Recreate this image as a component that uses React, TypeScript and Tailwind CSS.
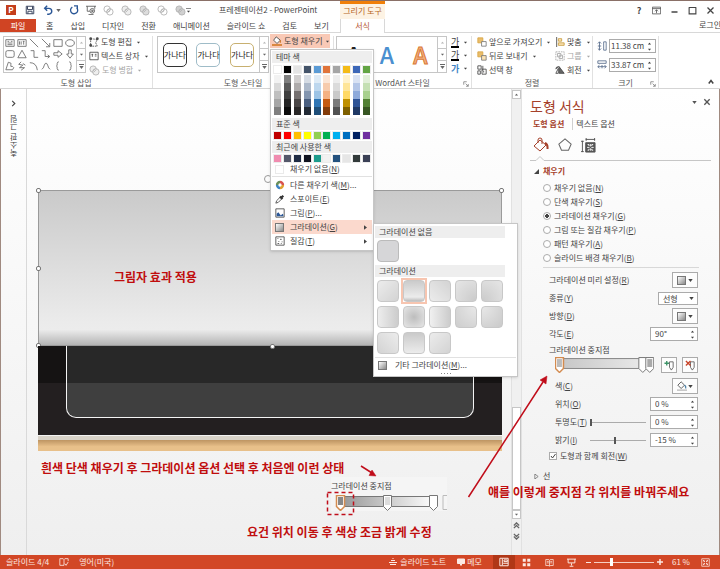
import type { ReactNode } from 'react';

const INK = 'text-[#444444]';

const THEME_COLORS = [
  { base: '#ffffff', tints: ['#f2f2f2', '#d9d9d9', '#bfbfbf', '#a6a6a6', '#7f7f7f'] },
  { base: '#000000', tints: ['#7f7f7f', '#595959', '#404040', '#262626', '#0d0d0d'] },
  { base: '#e4e4e4', tints: ['#d0cece', '#aeabab', '#757070', '#4a4646', '#2a2828'] },
  { base: '#44546a', tints: ['#d6dce4', '#adb9ca', '#8496b0', '#4a5f80', '#222a35'] },
  { base: '#5b9bd5', tints: ['#deebf6', '#bdd7ee', '#9cc3e5', '#2e75b5', '#1e4e79'] },
  { base: '#e0743a', tints: ['#fbe5d5', '#f7cbac', '#f4b183', '#c55a11', '#833c0b'] },
  { base: '#a5a5a5', tints: ['#ededed', '#dbdbdb', '#c9c9c9', '#7b7b7b', '#525252'] },
  { base: '#f4bb17', tints: ['#fff2cc', '#fee599', '#ffd965', '#bf9000', '#7f6000'] },
  { base: '#3c67b8', tints: ['#d9e2f3', '#b4c6e7', '#8eaadb', '#2f5496', '#1f3864'] },
  { base: '#63a544', tints: ['#e2efd9', '#c5e0b3', '#a8d08d', '#538135', '#375623'] },
];

const STANDARD_COLORS = ['#c00000', '#ff0000', '#ffc000', '#ffff00', '#92d050', '#00b050', '#00b0f0', '#0070c0', '#002060', '#7030a0'];
const RECENT_COLORS = ['#f08cb0', '#55596b', '#1f2c44', '#10131f', '#1d9c8c', '#f2f2f2', '#24527f', '#e6e6e6', '#333b3b', '#3b4156'];

const GRADIENTS = [
  'linear-gradient(135deg,#ececec,#d3d3d3)',
  'linear-gradient(180deg,#cbcbcb,#ececec 80%,#bdbdbd)',
  'linear-gradient(225deg,#d3d3d3,#ececec)',
  'radial-gradient(circle at 100% 100%,#cacaca,#e6e6e6)',
  'radial-gradient(circle at 0% 100%,#cacaca,#e6e6e6)',
  'linear-gradient(90deg,#ededed,#cccccc)',
  'radial-gradient(circle,#bdbdbd,#e6e6e6)',
  'linear-gradient(270deg,#cccccc,#f0f0f0)',
  'radial-gradient(circle at 100% 0%,#e8e8e8,#cdcdcd)',
  'radial-gradient(circle at 0% 0%,#e8e8e8,#cacaca)',
  'linear-gradient(45deg,#d3d3d3,#ececec)',
  'linear-gradient(0deg,#ececec,#cacaca)',
  'linear-gradient(315deg,#d3d3d3,#ececec)',
];

function Caret({ className = '' }: { className?: string }) {
  return (
    <svg viewBox="0 0 5 3" className={`w-[5px] h-[3px] shrink-0 ${className}`}>
      <path d="M0.3 0h4.4L2.5 3z" fill="currentColor" />
    </svg>
  );
}

function Icon({ children, className = 'size-[11px]', box = 12 }: { children: ReactNode; className?: string; box?: number }) {
  return (
    <svg viewBox={`0 0 ${box} ${box}`} className={`shrink-0 ${className}`} fill="none" stroke="currentColor" strokeWidth="1">
      {children}
    </svg>
  );
}

function Key({ text, k, tail = '' }: { text: string; k: string; tail?: string }) {
  return (
    <span className="whitespace-nowrap">
      {text}(<u>{k}</u>){tail}
    </span>
  );
}

/* ---------- title bar and tabs ---------- */

function MergeIcon({ fill = 'none' }: { fill?: string }) {
  return (
    <Icon className="size-[11px] text-[#b5b5b5]">
      <circle cx="4.5" cy="4.5" r="3.5" fill={fill} />
      <circle cx="7.5" cy="7.5" r="3.5" fill={fill} />
      <path d="M4 7l3-3M5 8l3-3" />
    </Icon>
  );
}

function QuickAccess() {
  return (
    <div className="flex items-center gap-[7px] pl-[6px] w-[192px] text-[#3f4a63]">
      <span className="flex items-center justify-center size-[10px] bg-[#c43e1c] text-white text-[8px] leading-none font-bold">P</span>
      <button aria-label="저장" className="ml-[2px]">
        <Icon className="size-[10px]">
          <path d="M1.500 1.500h9v9h-9zM3 1.500v4h6v-4M3.500 10.500v-3h5v3" strokeWidth="1.2" />
        </Icon>
      </button>
      <button aria-label="실행 취소" className="flex items-center gap-[3px] text-[#2b5797] ml-[1px]">
        <Icon className="size-[10px]">
          <path d="M5 1L2 4l3 3M2 4h5a3.4 3.4 0 010 7H5" strokeWidth="1.7" />
        </Icon>
        <Caret className="text-[#666]" />
      </button>
      <button aria-label="다시 실행" className="text-[#2b5797] ml-[1px]">
        <Icon className="size-[10px]">
          <path d="M4 2.500A4.3 4.3 0 1 0 9 3M6 1h4v4" strokeWidth="1.6" />
        </Icon>
      </button>
      <button aria-label="슬라이드 쇼 시작">
        <Icon className="size-[10px] text-[#555]">
          <path d="M0 1.500h12M1.500 1.500v6h3M10.500 1.500v3" />
          <circle cx="7.500" cy="7" r="2.800" />
          <path d="M3 11.500h6M7 5.800l2 1.200-2 1.200z" />
        </Icon>
      </button>
      <MergeIcon />
      <MergeIcon fill="#eeeeee" />
      <MergeIcon fill="#dddddd" />
      <MergeIcon />
      <MergeIcon fill="#d0d0d0" />
    </div>
  );
}

function TitleBar() {
  return (
    <div className="flex h-[18px] items-stretch">
      <div className="flex w-[340px] items-center">
        <QuickAccess />
        <button aria-label="빠른 실행 도구 모음 사용자 지정" className="-ml-[6px] flex flex-col items-center gap-px">
          <span className="h-px w-[5px] bg-[#888]" />
          <Caret className="scale-75" />
        </button>
        <span className="ml-[28px] whitespace-nowrap">프레젠테이션2 - PowerPoint</span>
      </div>
      <div className="w-[45px] shrink-0 border-t-[3px] border-[#f07f09] bg-[#fdf3e4] text-center leading-[14px] text-[#b5651d] whitespace-nowrap">
        그리기 도구
      </div>
      <div className="flex flex-1 items-center justify-end gap-[9px] pr-[5px] text-[#444]">
        <button aria-label="도움말" className="w-2 font-bold text-[9px] leading-none">?</button>
        <button aria-label="리본 표시 옵션">
          <Icon className="size-[9px]"><path d="M.5 1.500h11v9H.5zM.5 3.500h11M6 9.500V5M4 7l2-2 2 2" /></Icon>
        </button>
        <button aria-label="최소화">
          <Icon className="size-[9px]"><path d="M2 8h8" strokeWidth="2" /></Icon>
        </button>
        <button aria-label="최대화">
          <Icon className="size-[9px]"><path d="M1.500 2v8.500h9V2M1 2h10" strokeWidth="1.500" /></Icon>
        </button>
        <button aria-label="닫기">
          <Icon className="size-[9px]"><path d="M2 2l8 8M10 2l-8 8" strokeWidth="1.700" /></Icon>
        </button>
      </div>
    </div>
  );
}

function TabRow() {
  const tabs = ['홈', '삽입', '디자인', '전환', '애니메이션', '슬라이드 쇼', '검토', '보기'];
  return (
    <nav className="flex h-[14px] items-stretch">
      <div className="flex w-[340px] border-b border-[#d8d8d8]">
        <button className="w-9 mr-[2px] bg-[#d04423] text-white">파일</button>
        <div className="flex gap-px">
          {tabs.map((t) => (
            <button key={t} className="px-2 whitespace-nowrap">{t}</button>
          ))}
        </div>
      </div>
      <button className="w-[45px] shrink-0 border-x border-[#d8d8d8] text-[#b5532d]">서식</button>
      <div className="flex-1 overflow-hidden border-b border-[#d8d8d8] text-right">
        <button className="-mr-px whitespace-nowrap leading-[10px]">로그인</button>
      </div>
    </nav>
  );
}

/* ---------- ribbon ---------- */

function GalleryScroll() {
  return (
    <div className="flex w-[9px] flex-col border-l border-[#c6c6c6] text-[#666]">
      <button aria-label="위로" className="flex flex-1 items-center justify-center border-b border-[#c6c6c6]"><Caret className="rotate-180 scale-75 text-[#bbb]" /></button>
      <button aria-label="아래로" className="flex flex-1 items-center justify-center border-b border-[#c6c6c6]"><Caret className="scale-75" /></button>
      <button aria-label="자세히" className="flex flex-1 flex-col items-center justify-center gap-px">
        <span className="h-px w-[5px] bg-[#666]" />
        <Caret />
      </button>
    </div>
  );
}

function Group({ label, launcher, className = '', children }: { label: string; launcher?: boolean; className?: string; children: ReactNode }) {
  return (
    <div className={`flex flex-col justify-between border-r border-[#e1e1e1] ${className}`}>
      {children}
      <div className="relative text-center leading-[10px] text-[#555]">
        {label}
        {launcher && (
          <button aria-label={`${label} 옵션`} className="absolute right-[2px] top-[3px]">
            <Icon className="size-[6px] text-[#777]" box={8}><path d="M1 5V1h4M3.500 3.500L7 7M7 4v3H4" /></Icon>
          </button>
        )}
      </div>
    </div>
  );
}

function RibbonButton({ icon, label, caret = true, dim }: { icon: ReactNode; label: string; caret?: boolean; dim?: boolean }) {
  return (
    <button className={`flex h-[14px] items-center gap-[2px] whitespace-nowrap ${dim ? 'text-[#a6a6a6]' : ''}`}>
      {icon}
      <span>{label}</span>
      {caret && <Caret className="ml-[2px] scale-75" />}
    </button>
  );
}

const SHAPES = [
  'M1 2h10v8H1zM3 4h2M7 4h2M3 6h6M3 8h6', 'M1 2h10v8H1zM3 4v4M5 4v4M7 4h2M8 4v4', 'M1 1l10 10', 'M1 1l9 9M10.500 6v4.500H6', 'M1 2h10v8H1z', 'M6 2c7 0 7 8 0 8s-7-8 0-8z',
  'M3 2h6q2 0 2 2v4q0 2-2 2H3q-2 0-2-2V4q0-2 2-2z', 'M6 1.500L11 10.500H1z', 'M2 2h4v8h5', 'M1 2h4v7h5M8 7l2.500 2L8 11', 'M1 4.500h5V2l5 4-5 4V7.500H1z', 'M4.500 1v5H2l4 5 4-5H7.500V1z',
  'M4 1.500L1 10.500h8q3-3 0-4-3 1-2-2 2-2-3-3z', 'M5 1L2 4l5 1-4 3 6 0-4 3M7 3l3 2', 'M1 2q8 0 9 9', 'M1 10q2-1 3-5 2-5 4 0 1 4 3 5', 'M7 1Q5 1 5 3v2L4 6l1 1v2q0 2 2 2', 'M5 1q2 0 2 2v2l1 1-1 1v2q0 2-2 2',
];

function StyleTile({ color }: { color: string }) {
  return (
    <button className="flex size-[24px] items-center justify-center rounded-[5px] border bg-white text-[8px] whitespace-nowrap text-[#222]" style={{ borderColor: color }}>
      가나다
    </button>
  );
}

function StackIcon({ flip }: { flip?: boolean }) {
  return (
    <Icon className="size-[10px]">
      <path d="M1 1h6v6H1z" fill="#e9bd6c" stroke="#d9a441" />
      <path d="M5.500 5.500h5.500v5.500H5.500z" fill={flip ? '#fbe3b4' : '#fff'} stroke="#777" />
    </Icon>
  );
}

function SizeInput({ label, value, d }: { label: string; value: string; d: string }) {
  return (
    <div className="flex items-center gap-[2px]">
      <Icon className="size-[10px] text-[#556a8a]"><path d={d} /></Icon>
      <div className="flex h-[14px] w-[47px] items-center border border-[#ababab] bg-white pr-[3px]">
        <input aria-label={label} defaultValue={value} className="w-full min-w-0 pl-px text-[8px] outline-none" />
        <div className="flex flex-col gap-[3px]">
          <button aria-label={`${label} 증가`}><Caret className="block rotate-180 scale-75" /></button>
          <button aria-label={`${label} 감소`}><Caret className="block scale-75" /></button>
        </div>
      </div>
    </div>
  );
}

function Ribbon() {
  return (
    <div className="flex h-[56px] border-b border-[#d5d5d5] pt-[3px]">
      <Group label="도형 삽입" className="w-[153px] shrink-0">
        <div className="flex pl-[3px]">
          <div className="flex h-[37px] w-[83px] border border-[#c6c6c6]">
            <div className="grid flex-1 grid-cols-6 place-items-center text-[#666]">
              {SHAPES.map((d) => (
                <Icon key={d} className="size-[10px]"><path d={d} /></Icon>
              ))}
            </div>
            <GalleryScroll />
          </div>
          <div className="-mt-px flex flex-col pl-[3px]">
            <RibbonButton label="도형 편집" icon={<Icon className="size-[10px]"><path d="M2 2l8 1-2 4 2 4H2z" strokeDasharray="2 1" /><path d="M1 1h2v2H1zM9 1h2v2H9zM1 9h2v2H1z" fill="#555" /></Icon>} />
            <RibbonButton label="텍스트 상자" icon={<Icon className="size-[10px]"><path d="M1 1.500h10v9H1zM3 4h2M4 4v3M7 4h2M7 6h2" /></Icon>} />
            <RibbonButton dim label="도형 병합" icon={<MergeIcon fill="#eeeeee" />} />
          </div>
        </div>
      </Group>
      <Group label="도형 스타일" className="w-[181px] shrink-0">
        <div className="flex pl-1">
          <div className="flex h-[37px] w-[112px] shrink-0 border border-[#c6c6c6]">
            <div className="flex flex-1 items-center justify-around">
              <StyleTile color="#333333" />
              <StyleTile color="#9fbcc8" />
              <StyleTile color="#c8b070" />
            </div>
            <GalleryScroll />
          </div>
          <button className="-mt-[2px] ml-px flex h-[14px] w-[60px] items-center gap-[2px] bg-[#f9c9b6] pl-[2px] whitespace-nowrap">
            <Icon className="size-[10px]">
              <path d="M5 1l5 4-4 4-4-4z" fill="#fff" />
              <path d="M10 5v3" stroke="#d47b2a" strokeWidth="1.500" />
              <path d="M0 10.800h12" stroke="#d47b2a" strokeWidth="2" />
            </Icon>
            <span>도형 채우기</span>
            <Caret className="scale-75" />
          </button>
        </div>
      </Group>
      <Group label="WordArt 스타일" launcher className="w-[138px] shrink-0">
        <div className="flex pl-[2px]">
          <div className="flex h-[37px] w-[111px] border border-[#c6c6c6]">
            <div className="flex flex-1 items-center justify-around text-[23px] leading-none font-medium">
              <span className="text-[#222]">A</span>
              <span className="text-[#4a8fd0]">A</span>
              <span className="text-[#f4b183] [-webkit-text-stroke:1px_#d97a35]">A</span>
            </div>
            <GalleryScroll />
          </div>
          <div className="flex flex-col pl-[4px]">
            <button aria-label="텍스트 채우기" className="flex h-[13px] items-center gap-[4px]"><span className="border-b-2 border-black text-[9px] leading-[8px]">가</span><Caret className="scale-75" /></button>
            <button aria-label="텍스트 윤곽선" className="flex h-[13px] items-center gap-[4px]"><span className="border-b-2 border-black text-[9px] leading-[8px]">가</span><Caret className="scale-75" /></button>
            <button aria-label="텍스트 효과" className="flex h-[13px] items-center gap-[4px]"><span className="text-[9px] leading-[8px] font-bold text-[#3f83c4]">가</span><Caret className="scale-75" /></button>
          </div>
        </div>
      </Group>
      <Group label="정렬" className="w-[121px] shrink-0">
        <div className="-mt-px flex gap-[7px] pl-[5px]">
          <div className="flex w-[71px] flex-col">
            <RibbonButton label="앞으로 가져오기" icon={<StackIcon />} />
            <RibbonButton label="뒤로 보내기" icon={<StackIcon flip />} />
            <RibbonButton label="선택 창" caret={false} icon={<Icon className="size-[10px]"><path d="M1 1h4v4H1zM1 7h3v4H1zM7 1v6M6 5h5v6H6zM8 7v2" /></Icon>} />
          </div>
          <div className="flex flex-col">
            <RibbonButton label="맞춤" icon={<Icon className="size-[10px]"><path d="M2 0v12" /><path d="M4 2h4v3H4zM4 7h7v3H4z" stroke="#c79a3c" fill="#fbe3b4" /></Icon>} />
            <RibbonButton dim label="그룹" icon={<Icon className="size-[10px]"><path d="M1 1h10v10H1z" strokeDasharray="2 1" /><path d="M3 3h4v4H3zM5 5h4v4H5z" /></Icon>} />
            <RibbonButton label="회전" icon={<Icon className="size-[10px]"><path d="M1 5a3 3 0 013-3h1M5 10V2l6 8z" fill="#666" /><path d="M1 10h3V4z" /></Icon>} />
          </div>
        </div>
      </Group>
      <Group label="크기" launcher className="w-[66px] shrink-0">
        <div className="flex flex-col gap-[5px] pl-[4px] pt-[3px]">
          <SizeInput label="높이" value="11.38 cm" d="M3 1v10M1 3l2-2 2 2M1 9l2 2 2-2M1 6h4M8 1h3v10H8z" />
          <SizeInput label="너비" value="33.87 cm" d="M1 1h10v3H1zM1 8h10M3 6L1 8l2 2M9 6l2 2-2 2M6 6v4" />
        </div>
      </Group>
      <div className="flex flex-1 items-end justify-end pb-[3px] pr-[6px]">
        <button aria-label="리본 축소"><Icon className="size-[6px]" box={8}><path d="M1 6l3-4 3 4" strokeWidth="2" /></Icon></button>
      </div>
    </div>
  );
}

/* ---------- fill menu ---------- */

function SwatchRow({ colors }: { colors: string[] }) {
  return (
    <div className="flex justify-between px-[2px]">
      {colors.map((c) => (
        <button key={c} aria-label={c} className="size-[7px] outline outline-[#ececec]" style={{ backgroundColor: c }} />
      ))}
    </div>
  );
}

function MenuHeader({ children }: { children: ReactNode }) {
  return <div className="h-[12px] bg-[#eeeeee] pl-[4px] leading-[12px]">{children}</div>;
}

function GradientChip({ className = 'size-[9px]' }: { className?: string }) {
  return <span className={`block shrink-0 border border-[#777] bg-linear-to-br from-white to-[#8a8a8a] ${className}`} />;
}

function MenuItem({ icon, text, k, tail, active, sub }: { icon: ReactNode; text: string; k: string; tail?: string; active?: boolean; sub?: boolean }) {
  return (
    <button className={`flex h-[14px] w-full items-center pl-[2px] pr-[4px] ${active ? 'bg-[#fbd9cd]' : ''}`}>
      <span className="flex w-[16px] items-center pl-px">{icon}</span>
      <Key text={text} k={k} tail={tail} />
      {sub && <Caret className="ml-auto -rotate-90" />}
    </button>
  );
}

function FillMenu() {
  return (
    <div className="absolute left-[270px] top-[48px] z-20 w-[104px] border border-[#c6c6c6] bg-white p-px pb-[2px] shadow-sm">
      <MenuHeader>테마 색</MenuHeader>
      <div className="pt-[3px] pb-[2px]"><SwatchRow colors={THEME_COLORS.map((c) => c.base)} /></div>
      <div className="mb-[3px] flex justify-between px-[2px]">
        {THEME_COLORS.map((c) => (
          <div key={c.base} className="flex flex-col">
            {c.tints.map((t) => (
              <button key={t} aria-label={t} className="h-[8px] w-[7px]" style={{ backgroundColor: t }} />
            ))}
          </div>
        ))}
      </div>
      <MenuHeader>표준 색</MenuHeader>
      <div className="py-[2px]"><SwatchRow colors={STANDARD_COLORS} /></div>
      <MenuHeader>최근에 사용한 색</MenuHeader>
      <div className="pt-[2px]"><SwatchRow colors={RECENT_COLORS} /></div>
      <div className="mb-px border-b border-[#e1e1e1]">
        <MenuItem text="채우기 없음" k="N" icon={<span className="size-[9px] border border-[#eaeaea] bg-white" />} />
      </div>
      <MenuItem
        text="다른 채우기 색" k="M" tail="..."
        icon={<Icon className="size-[10px]"><g strokeWidth="3"><path d="M6 2.500a3.500 3.500 0 013.500 3.500" stroke="#d9534f" /><path d="M9.500 6A3.500 3.500 0 016 9.500" stroke="#e0a030" /><path d="M6 9.500A3.500 3.500 0 012.500 6" stroke="#3f83c4" /><path d="M2.500 6A3.500 3.500 0 016 2.500" stroke="#6a8f5a" /></g></Icon>}
      />
      <MenuItem text="스포이트" k="E" icon={<Icon className="size-[10px]"><path d="M1 11l1-3 4-4 2 2-4 4z" /><path d="M6 3l3 3M7.500 4.500L10 2" strokeWidth="2.500" stroke="#333" /></Icon>} />
      <MenuItem text="그림" k="P" tail="..." icon={<Icon className="size-[10px]"><path d="M1 1h10v10H1z" /><path d="M2 10V7l2-2 3 4 2-2 1 1v2z" fill="#2b5797" stroke="none" /></Icon>} />
      <MenuItem text="그라데이션" k="G" active sub icon={<GradientChip />} />
      <MenuItem text="질감" k="T" sub icon={<Icon className="size-[10px]"><path d="M1 1h10v10H1z" /><path d="M3 3h1M6 4h2M4 6l1 1M8 7h1M3 9h2M7 9h1" /></Icon>} />
    </div>
  );
}

function GradientMenu() {
  return (
    <div className="absolute left-[373px] top-[222px] z-30 w-[145px] border border-[#c6c6c6] bg-white px-px pt-[2px] pb-[2px] shadow-sm">
      <div className="mr-[11px]"><MenuHeader>그라데이션 없음</MenuHeader></div>
      <button aria-label="그라데이션 없음" className="mt-[2px] mb-[3px] ml-[2px] block size-[22px] rounded-[4px] border border-[#bbb] bg-[#d6d6d8]" />
      <div className="mr-[11px]"><MenuHeader>그라데이션</MenuHeader></div>
      <div className="grid w-fit grid-cols-5 pt-px pb-px">
        {GRADIENTS.map((g, i) => (
          <button
            key={g}
            aria-label={`그라데이션 ${i + 1}`}
            className={`flex size-[26px] items-center justify-center ${i === 1 ? 'border-2 border-[#f7c5b0]' : ''}`}
          >
            <span className="block size-[22px] shrink-0 rounded-[4px] border border-[#c8c8c8]" style={{ background: g }} />
          </button>
        ))}
      </div>
      <button className="flex h-[15px] w-full items-center gap-2 border-t border-[#e1e1e1] pl-[3px]">
        <GradientChip />
        <Key text="기타 그라데이션" k="M" tail="..." />
      </button>
      <div className="flex justify-center gap-[2px] pt-px">
        {[0, 1, 2, 3].map((n) => <span key={n} className="size-px bg-[#888]" />)}
      </div>
    </div>
  );
}

/* ---------- slide ---------- */

function Handle({ className }: { className: string }) {
  return <span className={`absolute size-[5px] rounded-[2px] border border-[#777] bg-white ${className}`} />;
}

function StopMarker({ x, active, fill = '#fff' }: { x: number; active?: boolean; fill?: string }) {
  return (
    <g transform={`translate(${x} 0)`}>
      <path d="M.5.5h8v11l-4 4-4-4z" fill="#fff" stroke={active ? '#d38b4f' : '#777'} strokeWidth={active ? 1.5 : 1} />
      <path d="M2 2h5v8H2z" fill={fill} />
    </g>
  );
}

function Slide() {
  return (
    <div className="absolute left-[11px] right-[9px] top-[101px]">
      <div className="relative h-[156px] border border-[#9a9a9a] bg-[linear-gradient(180deg,#cacaca,#ebebeb_85%,#ececec_90%,#b4b4b4)]">
        <span className="absolute left-1/2 -top-[16px] -ml-[6px] size-[8px] rounded-full border border-[#999]" />
        <Handle className="-left-[3px] -top-[3px] border-[#8d8d30]" />
        <Handle className="-right-[3px] -top-[3px] border-[#8d8d30]" />
        <Handle className="-left-[3px] top-[75px]" />
        <Handle className="-left-[3px] -bottom-[3px] border-[#8d8d30]" />
        <p className="pt-[77px] pl-[75px] text-[12px] leading-[18px] font-bold text-[#c00d0d]">그림자 효과 적용</p>
      </div>
      <div className="relative h-[89px] bg-[linear-gradient(180deg,#151313_37px,#231f20_37px)] px-[28px]">
        <div className="h-[72px] rounded-b-[10px] border border-t-0 border-[#f4f4f4] bg-[linear-gradient(180deg,#282828_37px,#3f3f3f_37px)]" />
        <Handle className="left-1/2 -top-[2px]" />
      </div>
      <div className="mt-px h-[4px] bg-[#d8d2c8]" />
      <div className="h-[11px] bg-linear-to-b from-[#bd9462] to-[#e8c08a] to-60%" />
    </div>
  );
}

function Canvas() {
  return (
    <div className="relative flex-1 border-l border-[#d9d9d9]">
      <Slide />
      <div className="absolute left-[304px] top-[388px] w-[116px] bg-[#f5f5f5]">
        <div className="leading-[18px]">그라데이션 중지점</div>
        <svg viewBox="0 0 116 16" className="block h-4 w-[116px]">
          <defs>
            <linearGradient id="stops"><stop offset="0" stopColor="#999" /><stop offset="1" stopColor="#fff" /></linearGradient>
          </defs>
          <path d="M12 1.500h92v10H12z" fill="url(#stops)" stroke="#777" />
          <StopMarker x={5} active fill="#888" />
          <StopMarker x={52} fill="#ddd" />
          <StopMarker x={98} />
          <path d="M116 .5h-4v14h4" fill="none" stroke="#bbb" />
        </svg>
      </div>
    </div>
  );
}

function ScrollBar() {
  return (
    <div className="flex w-[11px] flex-col items-center border-x border-[#e1e1e1] bg-[#f0f0f0] pt-px pb-[15px] text-[#666]">
      <button aria-label="위로 스크롤" className="flex size-[9px] shrink-0 items-center justify-center border border-[#c6c6c6] bg-white"><Caret className="rotate-180 scale-75" /></button>
      <div className="flex w-full flex-1 flex-col justify-end">
        <div className="h-[103px] border border-[#c6c6c6] bg-white" />
      </div>
      <button aria-label="아래로 스크롤" className="flex size-[9px] shrink-0 items-center justify-center border border-[#c6c6c6] bg-white"><Caret className="scale-75" /></button>
      <button aria-label="이전 슬라이드" className="mt-[3px]"><Icon className="block size-[7px]" box={8}><path d="M1 4l3-3 3 3M1 7l3-3 3 3" strokeWidth="1.500" /></Icon></button>
      <button aria-label="다음 슬라이드" className="mt-[4px]"><Icon className="block size-[7px]" box={8}><path d="M1 1l3 3 3-3M1 4l3 3 3-3" strokeWidth="1.500" /></Icon></button>
    </div>
  );
}

/* ---------- format pane ---------- */

const FILL_KINDS = [
  { text: '채우기 없음', k: 'N' },
  { text: '단색 채우기', k: 'S' },
  { text: '그라데이션 채우기', k: 'G' },
  { text: '그림 또는 질감 채우기', k: 'P' },
  { text: '패턴 채우기', k: 'A' },
  { text: '슬라이드 배경 채우기', k: 'B' },
];

function DropButton({ label, children }: { label: string; children: ReactNode }) {
  return (
    <button aria-label={label} className="flex h-4 w-[26px] items-center justify-between border border-[#ababab] bg-[#fdfdfd] px-[4px]">
      {children}
      <Caret />
    </button>
  );
}

function Spinner({ id, value }: { id: string; value: string }) {
  return (
    <div className="flex h-[14px] w-[48px] items-center border border-[#ababab] bg-white pr-[2px]">
      <input id={id} defaultValue={value} className="w-full min-w-0 pl-[4px] text-[8px] outline-none" />
      <div className="flex flex-col gap-[3px]">
        <button aria-label="증가"><Caret className="block rotate-180 scale-75" /></button>
        <button aria-label="감소"><Caret className="block scale-75" /></button>
      </div>
    </div>
  );
}

function Slider({ id, value }: { id: string; value: number }) {
  return (
    <input
      id={id} type="range" defaultValue={value}
      className="mr-[4px] ml-auto h-[8px] w-[56px] appearance-none bg-[linear-gradient(#ababab,#ababab)] bg-[length:100%_1px] bg-center bg-no-repeat [&::-webkit-slider-thumb]:h-[7px] [&::-webkit-slider-thumb]:w-[2px] [&::-webkit-slider-thumb]:appearance-none [&::-webkit-slider-thumb]:bg-[#555]"
    />
  );
}

function StopButton({ label, remove }: { label: string; remove?: boolean }) {
  return (
    <button aria-label={label} className="flex size-4 items-center justify-center border border-[#ababab] bg-[#fdfdfd]">
      <Icon className="size-[11px] text-[#666]">
        <path d="M6 2h4v6l-2 3-2-3z" />
        {remove ? <path d="M1 1l5 5M6 1L1 6" stroke="#c8452b" strokeWidth="1.500" /> : <path d="M3 1v5M.5 3.500h5" stroke="#3d9367" strokeWidth="1.500" />}
      </Icon>
    </button>
  );
}

function FormatPane() {
  return (
    <aside className="w-[197px] shrink-0 px-[8px] pt-[7px]">
      <div className="flex items-start justify-between">
        <h2 className="text-[14px] leading-[20px] text-[#a5402a]">도형 서식</h2>
        <div className="flex items-center gap-[6px] pt-[2px] text-[#555]">
          <Caret />
          <button aria-label="창 닫기"><Icon className="block size-[8px]"><path d="M2 2l8 8M10 2l-8 8" strokeWidth="2" /></Icon></button>
        </div>
      </div>
      <div className="mt-[2px] flex items-center pl-[3px] leading-[12px]">
        <button className="border-r border-[#d0d0d0] pr-[8px] font-bold text-[#a5402a]">도형 옵션</button>
        <button className="pl-[3px]">텍스트 옵션</button>
      </div>
      <div className="flex items-center gap-[9px] pt-[7px] pl-[3px]">
        <button aria-label="채우기 및 선">
          <Icon className="block size-[16px] text-[#a5402a]" box={16}>
            <path d="M7 3l6 5-6 6-6-5zM5 6V3q0-2 2-2t2 2v4" />
            <path d="M12 6q3 1 2.500 6" strokeWidth="2" />
          </Icon>
        </button>
        <button aria-label="효과">
          <Icon className="block size-[14px] text-[#666]" box={16}><path d="M8 1l7 6-3 7H4L1 7z" strokeWidth="1.200" /></Icon>
        </button>
        <button aria-label="크기 및 속성">
          <Icon className="block size-[15px] text-[#555]" box={16}>
            <path d="M1.500 3v12M0 3.500h3M0 14.500h3M5 1.500h10M5.500 0v3M14.500 0v3" />
            <path d="M5 5h10v10H5z" fill="#555" />
            <path d="M10 6.500v2.500M10 11v2.500M6.500 10h2.500M11 10h2.500M7 7h1.500v1.500M13 7h-1.500v1.500M7 13h1.500v-1.500M13 13h-1.500v-1.500" stroke="#fff" />
          </Icon>
        </button>
      </div>
      <svg viewBox="0 0 181 6" preserveAspectRatio="xMinYMid slice" className="mt-[2px] block h-[6px] w-full" fill="none" stroke="#c6c6c6">
        <path d="M0 5.500h6l4-4 4 4h167" />
      </svg>

      <section className="pt-[4px]">
        <h3 className="flex items-center gap-[4px] leading-[12px] font-bold text-[#a5402a]">
          <Icon className="size-[5px] ml-[4px]" box={6}><path d="M6 0v6H0z" fill="#444" stroke="none" /></Icon>
          <button>채우기</button>
        </h3>
        <div className="pt-[4px] pl-[13px]">
          {FILL_KINDS.map((f) => (
            <label key={f.k} className="flex h-[14px] items-center gap-[3px]">
              <input
                type="radio" name="fill" defaultChecked={f.k === 'G'}
                className="size-[8px] appearance-none rounded-full border border-[#ababab] bg-white checked:bg-[radial-gradient(circle,#444_2px,#fff_2px)]"
              />
              <Key text={f.text} k={f.k} />
            </label>
          ))}
        </div>
        <hr className="mt-[2px] mr-[12px] ml-[13px] border-[#d8d8d8]" />
        <div className="mr-[13px] ml-[19px] [&>div]:flex [&>div]:h-[18px] [&>div]:items-center [&>div]:justify-between">
          <div className="mt-[3px]">
            <Key text="그라데이션 미리 설정" k="R" />
            <DropButton label="그라데이션 미리 설정"><GradientChip /></DropButton>
          </div>
          <div>
            <label htmlFor="kind"><Key text="종류" k="Y" /></label>
            <span className="relative flex items-center">
              <select id="kind" className="h-[13px] w-[40px] appearance-none border border-[#ababab] bg-white pl-[4px] text-[8px] leading-[11px]">
                <option>선형</option>
              </select>
              <Caret className="pointer-events-none absolute right-[4px]" />
            </span>
          </div>
          <div>
            <Key text="방향" k="D" />
            <DropButton label="방향"><GradientChip /></DropButton>
          </div>
          <div>
            <label htmlFor="angle"><Key text="각도" k="E" /></label>
            <Spinner id="angle" value="90°" />
          </div>
        </div>
        <div className="mr-[13px] ml-[19px] leading-[13px]">그라데이션 중지점</div>
        <div className="mr-[13px] ml-[25px] flex items-start gap-[5px] pt-px">
          <svg viewBox="0 0 100 16" className="mr-[2px] block h-4 w-[100px]">
            <defs>
              <linearGradient id="pane"><stop offset="0" stopColor="#c6c6c6" /><stop offset="1" stopColor="#ececec" /></linearGradient>
            </defs>
            <path d="M4 1.500h92v10H4z" fill="url(#pane)" stroke="#888" />
            <StopMarker x={0} active fill="#bbb" />
            <StopMarker x={84} />
            <StopMarker x={91} fill="#aaa" />
          </svg>
          <StopButton label="그라데이션 중지점 추가" />
          <StopButton label="그라데이션 중지점 제거" remove />
        </div>
        <div className="mr-[13px] ml-[25px] pt-[4px] [&>div]:flex [&>div]:h-[18px] [&>div]:items-center [&>div]:justify-between">
          <div>
            <Key text="색" k="C" />
            <DropButton label="색">
              <Icon className="size-[10px]"><path d="M5 1l4 4-4 4-4-4z" /><path d="M9 5q2 1 1.500 4" strokeWidth="1.500" stroke="#4a7fa5" /><path d="M0 11h12" stroke="#c8c8c8" strokeWidth="2" /></Icon>
            </DropButton>
          </div>
          <div>
            <label htmlFor="pos"><Key text="위치" k="O" /></label>
            <Spinner id="pos" value="0 %" />
          </div>
          <div>
            <label htmlFor="alpha-range"><Key text="투명도" k="T" /></label>
            <Slider id="alpha-range" value={0} />
            <Spinner id="alpha" value="0 %" />
          </div>
          <div>
            <label htmlFor="light-range"><Key text="밝기" k="I" /></label>
            <Slider id="light-range" value={45} />
            <Spinner id="light" value="-15 %" />
          </div>
        </div>
        <label className="flex h-[14px] items-center gap-[3px] pl-[19px]">
          <span className="relative flex size-[8px]">
            <input type="checkbox" defaultChecked className="size-[8px] appearance-none border border-[#ababab] bg-white" />
            <Icon className="pointer-events-none absolute inset-0 size-[8px]" box={8}><path d="M2 4l1.500 2L6.500 2" /></Icon>
          </span>
          <Key text="도형과 함께 회전" k="W" />
        </label>
      </section>
      <h3 className="flex items-center gap-[4px] pt-[7px] pl-[4px] leading-[12px]">
        <Icon className="size-[5px]" box={6}><path d="M1 0l4 3-4 3z" stroke="#777" /></Icon>
        <button>선</button>
      </h3>
    </aside>
  );
}

/* ---------- annotations drawn over the window ---------- */

function Annotations() {
  const note = 'absolute text-[12px] leading-[18px] font-bold whitespace-nowrap text-[#c00d0d]';
  return (
    <div className="pointer-events-none absolute inset-0 z-40">
      <p className={`${note} left-[41px] top-[458px]`}>흰색 단색 채우기 후 그라데이션 옵션 선택 후 처음엔 이런 상태</p>
      <p className={`${note} left-[247px] top-[522px]`}>요건 위치 이동 후 색상 조금 밝게 수정</p>
      <p className={`${note} left-[488px] top-[482px]`}>얘를 이렇게 중지점 각 위치를 바꿔주세요</p>
      <svg viewBox="0 0 720 569" className="absolute left-0 top-0 h-[569px] w-[720px]" fill="none" stroke="#c00d1a">
        <path d="M361 465l11 7M468.500 496L543 381" strokeWidth="1.500" />
        <path d="M376 475l-7-.5 3-5.500zM547 375l-1 8-6-4z" fill="#c00d1a" strokeWidth=".5" />
        <path d="M327.500 491.500h26v22h-26z" strokeWidth="1.500" strokeDasharray="4 3" />
      </svg>
    </div>
  );
}

/* ---------- status bar ---------- */

function StatusBar() {
  return (
    <footer className="flex h-[14px] items-center bg-[#d24726] pl-[6px] pr-[10px] text-[#fbe9e3]">
      <span>슬라이드 4/4</span>
      <button aria-label="맞춤법 검사" className="ml-[10px]"><Icon className="block size-[10px]"><path d="M1 2h4l1 1v7H1zM6 3l1-1h4v3M7 8l1.500 2L11 6" /></Icon></button>
      <button className="ml-[10px]">영어(미국)</button>
      <button className="ml-auto flex items-center gap-[3px]">
        <Icon className="size-[8px]" box={8}><path d="M2 2.500h4M0 4.500h8M1 6.500h6M4 0v1" /></Icon>
        슬라이드 노트
      </button>
      <button className="ml-[11px] flex items-center gap-[2px]">
        <Icon className="size-[8px]" box={8}><path d="M.5 1h7v4.500H5L4 7.500 3 5.500H.5z" fill="currentColor" /></Icon>
        메모
      </button>
      <div className="ml-[11px] flex items-center">
        <button aria-label="기본 보기" className="flex h-[14px] w-[22px] items-center justify-center bg-[#b03717]">
          <Icon className="size-[10px]"><path d="M1 1.500h10v9H1zM4 2v8M5 7.500h6M6 3.500h4v2H6z" strokeWidth="1.200" /></Icon>
        </button>
        <button aria-label="여러 슬라이드" className="flex w-[23px] justify-center">
          <Icon className="size-[9px]"><path d="M1 1h4v4H1zM7 1h4v4H7zM1 7h4v4H1zM7 7h4v4H7z" fill="currentColor" stroke="none" /></Icon>
        </button>
        <button aria-label="읽기용 보기" className="flex w-[23px] justify-center">
          <Icon className="size-[9px]"><path d="M1 2h4l1 1 1-1h4v8H7l-1 1-1-1H1zM6 3v8M2.500 4.500H5M2.500 6.500H5M7 4.500h2.500M7 6.500h2.500" /></Icon>
        </button>
        <button aria-label="슬라이드 쇼" className="flex w-[22px] justify-center">
          <Icon className="size-[9px]"><path d="M0 1.500h12M1.500 1.500v5h9v-5M6 7v3M3.500 11h5" strokeWidth="1.300" /></Icon>
        </button>
      </div>
      <div className="ml-[3px] flex items-center gap-[3px]">
        <button aria-label="축소" className="h-px w-[5px] bg-current" />
        <input
          type="range" aria-label="확대/축소" defaultValue={29}
          className="h-[8px] w-[60px] appearance-none bg-[linear-gradient(#f6cfc3,#f6cfc3)] bg-[length:100%_1px] bg-center bg-no-repeat [&::-webkit-slider-thumb]:h-[8px] [&::-webkit-slider-thumb]:w-[3px] [&::-webkit-slider-thumb]:appearance-none [&::-webkit-slider-thumb]:bg-white"
        />
        <button aria-label="확대"><Icon className="block size-[6px]" box={6}><path d="M0 3h6M3 0v6" strokeWidth="1.500" /></Icon></button>
      </div>
      <span className="ml-[9px]">61 %</span>
      <button aria-label="창에 맞춤" className="ml-[11px]">
        <Icon className="block size-[9px]"><path d="M1 1h10v10H1z" /><path d="M3 3l2 2M9 3L7 5M3 9l2-2M9 9L7 7" strokeWidth="1.500" /></Icon>
      </button>
    </footer>
  );
}

export default function App() {
  return (
    <div className={`relative flex min-h-screen flex-col overflow-hidden border-t border-[#8a7067] bg-white font-['Noto_Sans_CJK_KR','Noto_Sans',sans-serif] text-[8px] leading-[12px] ${INK}`}>
      <header className="bg-white">
        <TitleBar />
        <TabRow />
        <Ribbon />
      </header>
      <main className="flex flex-1 border-x border-[#a08a80] bg-linear-to-b from-white via-[#f7f7f7] to-[#efefef]">
        <div className="flex w-[25px] shrink-0 flex-col items-center pt-[11px]">
          <button aria-label="축소판 펼치기"><Icon className="block size-[7px]" box={8}><path d="M2.500 1l3 3-3 3" strokeWidth="1.300" /></Icon></button>
          <span className="mt-[8px] rotate-180 whitespace-nowrap [writing-mode:vertical-rl]">축소판 그림</span>
        </div>
        <Canvas />
        <ScrollBar />
        <FormatPane />
      </main>
      <StatusBar />
      <FillMenu />
      <GradientMenu />
      <Annotations />
    </div>
  );
}
